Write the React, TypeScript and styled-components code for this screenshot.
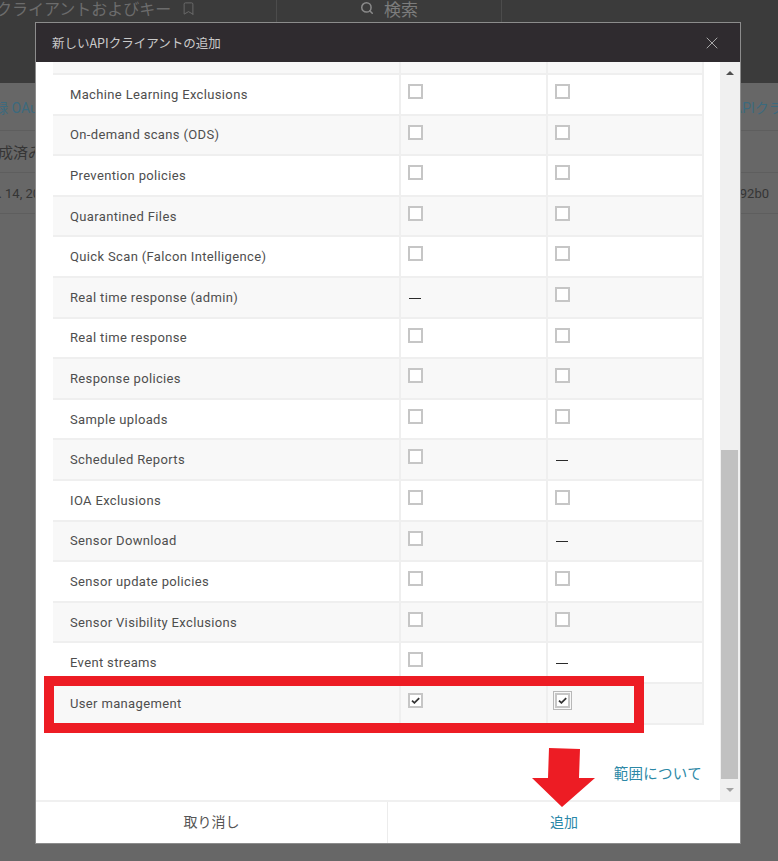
import React from 'react';
import styled, { createGlobalStyle, css } from 'styled-components';
import { X, Search, Bookmark } from 'lucide-react';

type Access = 'box' | 'dash' | 'checked';

const scopes: [string, Access, Access][] = [
	['Machine Learning Exclusions', 'box', 'box'],
	['On-demand scans (ODS)', 'box', 'box'],
	['Prevention policies', 'box', 'box'],
	['Quarantined Files', 'box', 'box'],
	['Quick Scan (Falcon Intelligence)', 'box', 'box'],
	['Real time response (admin)', 'dash', 'box'],
	['Real time response', 'box', 'box'],
	['Response policies', 'box', 'box'],
	['Sample uploads', 'box', 'box'],
	['Scheduled Reports', 'box', 'dash'],
	['IOA Exclusions', 'box', 'box'],
	['Sensor Download', 'box', 'dash'],
	['Sensor update policies', 'box', 'box'],
	['Sensor Visibility Exclusions', 'box', 'box'],
	['Event streams', 'box', 'dash'],
	['User management', 'checked', 'checked'],
];

const GlobalStyle = createGlobalStyle`
	html, body {
		margin: 0;
		padding: 0;
	}
	body {
		font-family: Roboto, "Noto Sans CJK JP", sans-serif;
		background: #676767;
	}
`;

const Page = styled.div`
	position: relative;
	width: 778px;
	height: 861px;
	overflow: hidden;
	background: #676767;
`;

/* background page, dimmed by the dialog */
const TopArea = styled.div`
	height: 83px;
	background: #3b3b3b;
`;

const TopNav = styled.div`
	display: flex;
	height: 22px;
`;

const NavTitle = styled.div`
	width: 276px;
	display: flex;
	align-items: flex-start;
	gap: 10px;
	color: #6c6c6c;
	font-family: "Noto Sans CJK JP", sans-serif;
	font-size: 16px;
	line-height: 17px;
	white-space: nowrap;

	span {
		margin-left: -4px;
	}

	svg {
		margin-top: 1px;
	}
`;

const SearchTab = styled.div`
	width: 224px;
	border-left: 1px solid #4c4c4c;
	border-right: 1px solid #4c4c4c;
	display: flex;
	justify-content: center;
	align-items: flex-start;
	gap: 10px;
	color: #7c7c7c;
	font-family: "Noto Sans CJK JP", sans-serif;
	font-size: 17px;
	line-height: 17px;

	svg {
		margin-top: 1px;
	}
`;

const BgRow = styled.div<{ $h: number }>`
	display: grid;
	grid-template-columns: 733px 1fr;
	align-items: center;
	height: ${(p) => p.$h}px;
	border-bottom: 1px solid #5e5e5e;
	box-sizing: border-box;
	white-space: nowrap;
	overflow: hidden;
`;

const BgCell = styled.div<{ $shift?: number; $link?: boolean; $size?: number }>`
	overflow: hidden;
	color: ${(p) => (p.$link ? '#3c6a7e' : '#353535')};
	font-size: ${(p) => p.$size ?? 14}px;

	span {
		display: inline-block;
		margin-left: ${(p) => p.$shift ?? 0}px;
	}
`;

/* dialog */
const Modal = styled.div`
	position: absolute;
	left: 35px;
	top: 22px;
	width: 704px;
	border: 1px solid #8c8c8c;
	background: #fff;
	display: flex;
	flex-direction: column;
`;

const Header = styled.div`
	height: 39px;
	background: #2f2b2f;
	display: flex;
	align-items: center;
	justify-content: space-between;
	padding: 0 18px 0 16px;
`;

const Title = styled.h2`
	margin: 0;
	font-family: "Noto Sans CJK JP", sans-serif;
	font-weight: 400;
	font-size: 12.5px;
	color: #cacaca;
`;

const Body = styled.div`
	display: flex;
	height: 738px;
`;

const Content = styled.div`
	flex: 1;
	overflow: hidden;
	padding: 0 16px 0 17px;
`;

const Row = styled.div<{ $shade: boolean; $partial?: boolean }>`
	display: grid;
	grid-template-columns: 348px 147px 156px;
	height: ${(p) => (p.$partial ? '13px' : '40.6px')};
	box-sizing: border-box;
	border-bottom: 2px solid #efefef;
	background: ${(p) => (p.$shade ? '#f8f8f8' : '#fff')};
`;

const Cell = styled.div`
	border-right: 2px solid #efefef;
`;

const LabelCell = styled(Cell)`
	display: flex;
	align-items: center;
	padding-left: 17px;
	color: #4e4e4e;
	font-size: 13px;
	letter-spacing: 0.35px;
`;

const CheckCell = styled(Cell)`
	display: flex;
	align-items: flex-start;
	padding: 9px 0 0 7px;
`;

const DashCell = styled(Cell)`
	display: flex;
	align-items: center;
	padding-left: 8px;
`;

const Dash = styled.span`
	width: 12px;
	height: 1px;
	background: #2a2a2a;
	margin-top: 2px;
`;

const Box = styled.span<{ $focused?: boolean }>`
	width: 15px;
	height: 15px;
	box-sizing: border-box;
	border: 2px solid #c6c6c6;
	background: #fff;
	display: flex;
	align-items: center;
	justify-content: center;
	${(p) =>
		p.$focused &&
		css`
			outline: 1px solid #b8b8b8;
			outline-offset: 1px;
		`}
`;

const LinkRow = styled.div`
	display: flex;
	justify-content: flex-end;
	padding: 38px 2px 0 0;
`;

const ScopeLink = styled.a`
	font-family: "Noto Sans CJK JP", sans-serif;
	font-size: 14.5px;
	line-height: 20px;
	color: #2c88a6;
	letter-spacing: 0.3px;
	text-decoration: none;
`;

const Scrollbar = styled.div`
	width: 20px;
	background: #f0f0f0;
	display: flex;
	flex-direction: column;
`;

const ScrollButton = styled.div<{ $down?: boolean; $h: number }>`
	height: ${(p) => p.$h}px;
	display: flex;
	align-items: center;
	justify-content: center;

	&::after {
		content: '';
		border-left: 4px solid transparent;
		border-right: 4px solid transparent;
		${(p) =>
			p.$down
				? css`
						border-top: 4px solid #a3a3a3;
				  `
				: css`
						border-bottom: 4px solid #505050;
				  `}
	}
`;

const Thumb = styled.div`
	margin: auto 2px 0 1px;
	height: 329px;
	background: #c1c1c1;
`;

const Footer = styled.div`
	display: grid;
	grid-template-columns: 352px 1fr;
	height: 41px;
	border-top: 2px solid #f0f0f0;
`;

const FooterButton = styled.button<{ $primary?: boolean }>`
	border: none;
	background: #fff;
	font-family: "Noto Sans CJK JP", sans-serif;
	font-size: 14px;
	line-height: 20px;
	color: ${(p) => (p.$primary ? '#2a87a8' : '#555')};
	border-right: ${(p) => (p.$primary ? 'none' : '1px solid #ececec')};
	padding: 0 0 4px;
	cursor: pointer;
`;

/* annotations drawn over the screenshot */
const Highlight = styled.div`
	position: absolute;
	left: 44px;
	top: 676px;
	width: 600px;
	height: 57px;
	box-sizing: border-box;
	border: 10px solid #ed1c24;
`;

const ArrowMark = styled.svg`
	position: absolute;
	left: 532px;
	top: 748px;
`;

const Tick = () => (
	<svg width="9" height="7" viewBox="0 0 9 7">
		<path d="M1 3.6 L3.4 5.8 L8.2 1.2" fill="none" stroke="#333" strokeWidth="1.8" />
	</svg>
);

const AccessCell = ({ value, focused }: { value: Access; focused?: boolean }) => {
	if (value === 'dash') {
		return (
			<DashCell>
				<Dash />
			</DashCell>
		);
	}
	return (
		<CheckCell>
			<Box $focused={focused}>{value === 'checked' && <Tick />}</Box>
		</CheckCell>
	);
};

const App = () => {
	return (
		<Page>
			<GlobalStyle />
			<TopArea>
				<TopNav>
					<NavTitle>
						<span>クライアントおよびキー</span>
						<Bookmark size={15} strokeWidth={1.5} color="#6c6c6c" />
					</NavTitle>
					<SearchTab>
						<Search size={14} strokeWidth={2.6} color="#8a8a8a" />
						検索
					</SearchTab>
				</TopNav>
			</TopArea>
			<BgRow $h={48}>
				<BgCell $shift={-20} $link>
					<span>記録 OAuth 2.0</span>
				</BgCell>
				<BgCell $link>APIクライアント</BgCell>
			</BgRow>
			<BgRow $h={42}>
				<BgCell $shift={-17} $size={15}>
					<span>作成済み</span>
				</BgCell>
				<BgCell />
			</BgRow>
			<BgRow $h={41}>
				<BgCell $shift={-21} $size={13}>
					<span>Apr. 14, 2023</span>
				</BgCell>
				<BgCell $size={13}>c92b0</BgCell>
			</BgRow>

			<Modal>
				<Header>
					<Title>新しいAPIクライアントの追加</Title>
					<X size={20} strokeWidth={1.1} color="#b4b4b4" />
				</Header>
				<Body>
					<Content>
						<Row $shade $partial>
							<Cell />
							<Cell />
							<Cell />
						</Row>
						{scopes.map(([label, read, write], i) => (
							<Row key={label} $shade={i % 2 === 1}>
								<LabelCell>{label}</LabelCell>
								<AccessCell value={read} />
								<AccessCell value={write} focused={label === 'User management'} />
							</Row>
						))}
						<LinkRow>
							<ScopeLink>範囲について</ScopeLink>
						</LinkRow>
					</Content>
					<Scrollbar>
						<ScrollButton $h={22} />
						<Thumb />
						<ScrollButton $h={21} $down />
					</Scrollbar>
				</Body>
				<Footer>
					<FooterButton>取り消し</FooterButton>
					<FooterButton $primary>追加</FooterButton>
				</Footer>
			</Modal>

			<Highlight />
			<ArrowMark width="64" height="60" viewBox="0 0 64 60">
				<polygon points="17,0 48,1 47,30 63,30 30,59 0,30 16,30" fill="#ed1c24" />
			</ArrowMark>
		</Page>
	);
};

export default App;
